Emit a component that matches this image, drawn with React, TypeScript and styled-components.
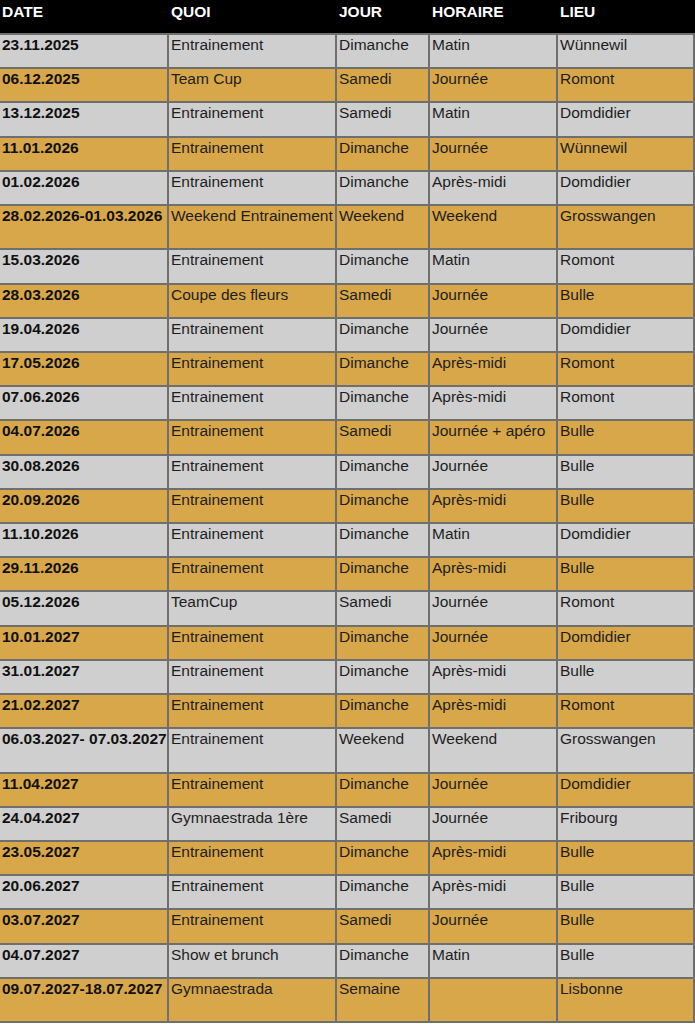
import React from 'react'
import styled, { createGlobalStyle } from 'styled-components'

const GlobalStyle = createGlobalStyle`
    html, body {
        margin: 0;
        padding: 0;
        background: #ffffff;
    }
    body {
        font-family: 'Liberation Sans', Arial, sans-serif;
    }
`

const COLS = '169px 168px 93px 128px 137px'

const Sheet = styled.div`
    width: 695px;
    display: flex;
    flex-direction: column;
    font-size: 15.5px;
    line-height: 18px;
    color: #1a1a1a;
`

const HeaderRow = styled.div`
    display: grid;
    grid-template-columns: ${COLS};
    height: 35px;
    box-sizing: border-box;
    background: #000000;
    border-bottom: 2px solid #6f6f6f;
`

const HeaderCell = styled.div`
    padding: 3px 0 0 2px;
    color: #ffffff;
    font-weight: 700;
`

const Row = styled.div<{ $gold: boolean; $tall: boolean }>`
    display: grid;
    grid-template-columns: ${COLS};
    height: ${(p) => (p.$tall ? '44.5px' : '34.2px')};
    box-sizing: border-box;
    background: ${(p) => (p.$gold ? '#d8a74a' : '#cfcfcf')};
    border-bottom: 2px solid #6f6f6f;
`

const Cell = styled.div<{ $bold?: boolean }>`
    box-sizing: border-box;
    padding: 1px 0 0 2px;
    border-right: 2px solid #6f6f6f;
    white-space: nowrap;
    overflow: hidden;
    font-weight: ${(p) => (p.$bold ? 700 : 400)};
    color: ${(p) => (p.$bold ? '#111111' : '#1e1e1e')};
`

type Entry = [string, string, string, string, string, boolean?]

const rows: Entry[] = [
    ['23.11.2025', 'Entrainement', 'Dimanche', 'Matin', 'Wünnewil'],
    ['06.12.2025', 'Team Cup', 'Samedi', 'Journée', 'Romont'],
    ['13.12.2025', 'Entrainement', 'Samedi', 'Matin', 'Domdidier'],
    ['11.01.2026', 'Entrainement', 'Dimanche', 'Journée', 'Wünnewil'],
    ['01.02.2026', 'Entrainement', 'Dimanche', 'Après-midi', 'Domdidier'],
    ['28.02.2026-01.03.2026', 'Weekend Entrainement', 'Weekend', 'Weekend', 'Grosswangen', true],
    ['15.03.2026', 'Entrainement', 'Dimanche', 'Matin', 'Romont'],
    ['28.03.2026', 'Coupe des fleurs', 'Samedi', 'Journée', 'Bulle'],
    ['19.04.2026', 'Entrainement', 'Dimanche', 'Journée', 'Domdidier'],
    ['17.05.2026', 'Entrainement', 'Dimanche', 'Après-midi', 'Romont'],
    ['07.06.2026', 'Entrainement', 'Dimanche', 'Après-midi', 'Romont'],
    ['04.07.2026', 'Entrainement', 'Samedi', 'Journée + apéro', 'Bulle'],
    ['30.08.2026', 'Entrainement', 'Dimanche', 'Journée', 'Bulle'],
    ['20.09.2026', 'Entrainement', 'Dimanche', 'Après-midi', 'Bulle'],
    ['11.10.2026', 'Entrainement', 'Dimanche', 'Matin', 'Domdidier'],
    ['29.11.2026', 'Entrainement', 'Dimanche', 'Après-midi', 'Bulle'],
    ['05.12.2026', 'TeamCup', 'Samedi', 'Journée', 'Romont'],
    ['10.01.2027', 'Entrainement', 'Dimanche', 'Journée', 'Domdidier'],
    ['31.01.2027', 'Entrainement', 'Dimanche', 'Après-midi', 'Bulle'],
    ['21.02.2027', 'Entrainement', 'Dimanche', 'Après-midi', 'Romont'],
    ['06.03.2027- 07.03.2027', 'Entrainement', 'Weekend', 'Weekend', 'Grosswangen', true],
    ['11.04.2027', 'Entrainement', 'Dimanche', 'Journée', 'Domdidier'],
    ['24.04.2027', 'Gymnaestrada 1ère', 'Samedi', 'Journée', 'Fribourg'],
    ['23.05.2027', 'Entrainement', 'Dimanche', 'Après-midi', 'Bulle'],
    ['20.06.2027', 'Entrainement', 'Dimanche', 'Après-midi', 'Bulle'],
    ['03.07.2027', 'Entrainement', 'Samedi', 'Journée', 'Bulle'],
    ['04.07.2027', 'Show et brunch', 'Dimanche', 'Matin', 'Bulle'],
    ['09.07.2027-18.07.2027', 'Gymnaestrada', 'Semaine', '', 'Lisbonne', true],
]

const headers = ['DATE', 'QUOI', 'JOUR', 'HORAIRE', 'LIEU']

const App: React.FC = () => {
    return (
        <>
            <GlobalStyle />
            <Sheet>
                <HeaderRow>
                    {headers.map((h) => (
                        <HeaderCell key={h}>{h}</HeaderCell>
                    ))}
                </HeaderRow>
                {rows.map(([date, quoi, jour, horaire, lieu, tall], i) => (
                    <Row key={date} $gold={i % 2 === 1} $tall={!!tall}>
                        <Cell $bold>{date}</Cell>
                        <Cell>{quoi}</Cell>
                        <Cell>{jour}</Cell>
                        <Cell>{horaire}</Cell>
                        <Cell>{lieu}</Cell>
                    </Row>
                ))}
            </Sheet>
        </>
    )
}

export default App
